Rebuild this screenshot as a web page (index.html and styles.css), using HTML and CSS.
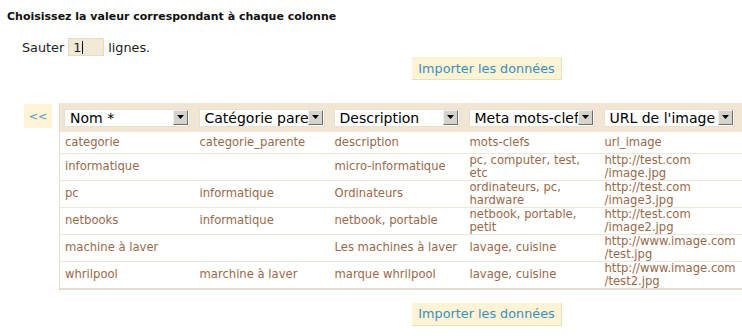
FILE: index.html
```html
<!DOCTYPE html>
<html lang="fr">
  <head>
    <meta charset="UTF-8" />
    <title>Import CSV</title>
    <link rel="stylesheet" href="styles.css">
  </head>
  <body>
    <h3 class="title">Choisissez la valeur correspondant à chaque colonne</h3>

    <div class="skip-row">
      Sauter <span class="skip-input">1<span class="caret"></span></span> lignes.
    </div>

    <div class="actions">
      <span class="import-button">Importer les données</span>
    </div>

    <div class="mapping">
      <span class="back-button">&lt;&lt;</span>

      <table class="mapping-table">
        <thead>
          <tr>
            <th><div class="picker"><span class="picker-label">Nom *</span><span class="picker-arrow"><svg width="7" height="4" viewBox="0 0 7 4"><path d="M0 0h7L3.5 4z" fill="#000"/></svg></span></div></th>
            <th><div class="picker"><span class="picker-label">Catégorie parente</span><span class="picker-arrow"><svg width="7" height="4" viewBox="0 0 7 4"><path d="M0 0h7L3.5 4z" fill="#000"/></svg></span></div></th>
            <th><div class="picker"><span class="picker-label">Description</span><span class="picker-arrow"><svg width="7" height="4" viewBox="0 0 7 4"><path d="M0 0h7L3.5 4z" fill="#000"/></svg></span></div></th>
            <th><div class="picker"><span class="picker-label">Meta mots-clefs</span><span class="picker-arrow"><svg width="7" height="4" viewBox="0 0 7 4"><path d="M0 0h7L3.5 4z" fill="#000"/></svg></span></div></th>
            <th><div class="picker wide"><span class="picker-label">URL de l'image</span><span class="picker-arrow"><svg width="7" height="4" viewBox="0 0 7 4"><path d="M0 0h7L3.5 4z" fill="#000"/></svg></span></div></th>
          </tr>
        </thead>
        <tbody>
          <tr>
            <td>categorie</td>
            <td>categorie_parente</td>
            <td>description</td>
            <td>mots-clefs</td>
            <td>url_image</td>
          </tr>
          <tr>
            <td>informatique</td>
            <td></td>
            <td>micro-informatique</td>
            <td>pc, computer, test,<br>etc</td>
            <td>http://test.com<br>/image.jpg</td>
          </tr>
          <tr>
            <td>pc</td>
            <td>informatique</td>
            <td>Ordinateurs</td>
            <td>ordinateurs, pc,<br>hardware</td>
            <td>http://test.com<br>/image3.jpg</td>
          </tr>
          <tr>
            <td>netbooks</td>
            <td>informatique</td>
            <td>netbook, portable</td>
            <td>netbook, portable,<br>petit</td>
            <td>http://test.com<br>/image2.jpg</td>
          </tr>
          <tr>
            <td>machine à laver</td>
            <td></td>
            <td>Les machines à laver</td>
            <td>lavage, cuisine</td>
            <td>http://www.image.com<br>/test.jpg</td>
          </tr>
          <tr>
            <td>whrilpool</td>
            <td>marchine à laver</td>
            <td>marque whrilpool</td>
            <td>lavage, cuisine</td>
            <td>http://www.image.com<br>/test2.jpg</td>
          </tr>
        </tbody>
      </table>
    </div>

    <div class="actions bottom">
      <span class="import-button">Importer les données</span>
    </div>
  </body>
</html>
```

FILE: styles.css
```css
* {
  box-sizing: border-box;
  margin: 0;
  padding: 0;
}

body {
  background-color: #fff;
  font-family: "DejaVu Sans", Verdana, sans-serif;
  font-size: 11px;
  color: #222;
}

.title {
  margin: 10px 0 0 7px;
  font-size: 11px;
  font-weight: bold;
  line-height: 14px;
  color: #111;
}

.skip-row {
  display: flex;
  align-items: center;
  gap: 4px;
  margin: 14px 0 0 22px;
  font-size: 12.8px;
}

.skip-input {
  display: inline-flex;
  align-items: center;
  width: 36px;
  height: 18px;
  padding-left: 4px;
  background-color: #f1ead7;
  border: 1px solid #e3dac4;
}

.caret {
  display: inline-block;
  width: 1px;
  height: 13px;
  margin-left: 1px;
  background-color: #000;
}

.actions {
  margin: 1px 0 0 412px;
}

.actions.bottom {
  margin-top: 13px;
}

.import-button {
  display: inline-flex;
  align-items: center;
  justify-content: center;
  width: 150px;
  height: 23px;
  background-color: #fdf4d6;
  border-right: 1px solid #ebdfba;
  border-bottom: 1px solid #ebdfba;
  color: #3d8dbd;
  font-size: 12.8px;
}

.mapping {
  display: flex;
  align-items: flex-start;
  gap: 7px;
  margin: 23px 0 0 24px;
}

.back-button {
  display: flex;
  align-items: center;
  justify-content: center;
  width: 28px;
  height: 24px;
  margin-top: 1px;
  background-color: #fdf4d6;
  color: #4a93c2;
  font-size: 11px;
}

.mapping-table {
  width: 682px;
  border-collapse: collapse;
  border-left: 1px solid #e4dccf;
  border-bottom: 2px solid #e4dccf;
  table-layout: fixed;
}

.mapping-table th {
  width: 135px;
  height: 29px;
  padding: 0 0 0 4px;
  background-color: #f0e6d3;
  text-align: left;
  font-weight: normal;
}

.mapping-table th:last-child {
  width: 142px;
}

.picker {
  display: flex;
  align-items: flex-start;
  width: 126px;
  height: 18px;
  overflow: hidden;
  background-color: #fff;
  border: 1px solid #e7e0d2;
}

.picker.wide {
  width: 131px;
}

.picker-label {
  flex: 1;
  overflow: hidden;
  white-space: nowrap;
  padding: 0 0 0 5px;
  font-size: 14px;
  line-height: 16px;
  color: #000;
}

.picker-arrow {
  display: flex;
  align-items: center;
  justify-content: center;
  width: 15px;
  height: 15px;
  margin: 0 1px 0 0;
  background-color: #d6d3cc;
  border-top: 1px solid #f4f2ee;
  border-left: 1px solid #f4f2ee;
  border-right: 1px solid #6f6c66;
  border-bottom: 1px solid #6f6c66;
}

.mapping-table td {
  height: 21px;
  padding: 0 2px 0 5px;
  border-top: 1px solid #ede6dc;
  vertical-align: middle;
  font-size: 11.6px;
  line-height: 13px;
  color: #98694b;
  white-space: nowrap;
  overflow: hidden;
}

.mapping-table tbody tr:first-child td {
  border-top: none;
}
```
